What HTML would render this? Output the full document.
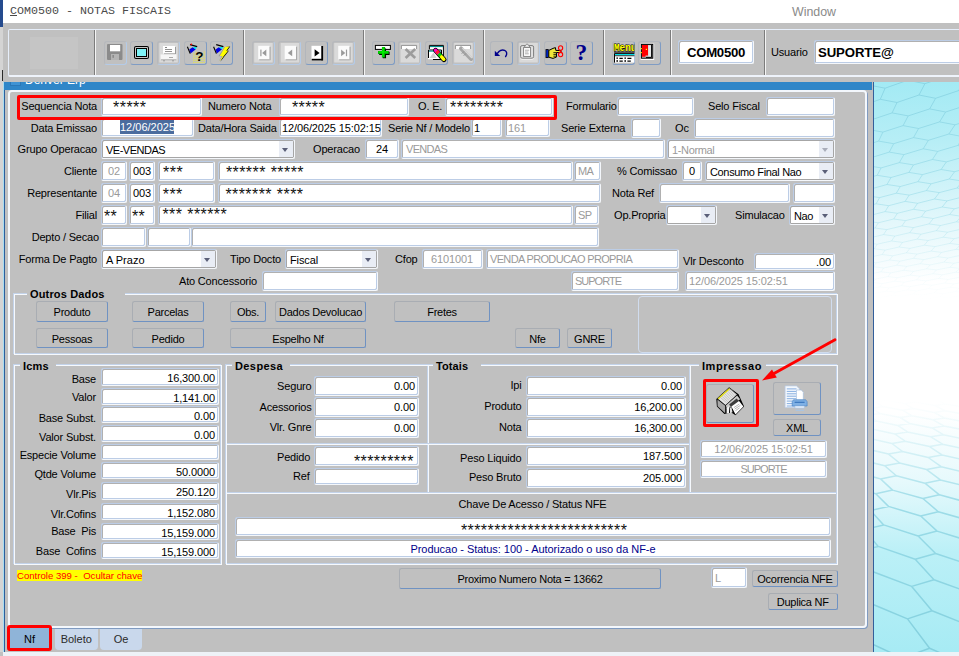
<!DOCTYPE html>
<html lang="pt"><head><meta charset="utf-8"><title>COM0500 - NOTAS FISCAIS</title>
<style>
html,body{margin:0;padding:0;}
body{width:959px;height:656px;overflow:hidden;background:#c0c0c0;position:relative;font-family:"Liberation Sans",sans-serif;font-size:11px;color:#000;}
body>div{position:absolute;box-sizing:border-box;}
.mono{font-family:"Liberation Mono",monospace;font-size:11.67px;line-height:16px;color:#4a4a4a;white-space:pre;}
.l{line-height:14px;white-space:nowrap;letter-spacing:-0.18px;}
.f{background:#fff;border:1px solid;border-color:#bccde6 #f4f7fb #f4f7fb #bccde6;border-radius:2.5px;box-shadow:inset 1px 1px 0 #b0b0b0,inset -1px -1px 0 #bccde6;white-space:nowrap;overflow:hidden;letter-spacing:-0.12px;}
.f.big{font-weight:bold;font-size:13.2px;}
.st{font-size:16px;letter-spacing:0.43px;line-height:14px;white-space:pre;color:#111;}
.cbx{box-shadow:inset 1px 1px 0 #a6a6a6,inset -1px -1px 0 #a6a6a6;}
.cb{position:absolute;right:1px;top:1px;width:14px;background:#e9edf5;}
.cb b{position:absolute;left:3px;top:50%;margin-top:-1.2px;border:3.8px solid transparent;border-top:4.3px solid #555;border-bottom:none;width:0;height:0;}
.b{background:#c0c0c0;border:1px solid;border-color:#a9adb3 #6f92c2 #6f92c2 #a9adb3;border-radius:2.5px;text-align:center;white-space:nowrap;letter-spacing:-0.25px;}
.tb{border:1px solid;border-color:#b2b6bc #7f9cc4 #7f9cc4 #b2b6bc;border-radius:3px;}
.tb.dis{border-color:#b6b8bc #b4cbe8 #b4cbe8 #b6b8bc;}
.fs1{border:1px solid #c3d3ea;}
.fs2{border:1px solid #f6f9fd;}
.lg{background:#c0c0c0;font-weight:bold;line-height:14px;padding-left:3px;font-size:11px;letter-spacing:0.15px;white-space:nowrap;}
#bg{background:linear-gradient(to bottom,#a3eaf4 0px,#b7eef6 60px,#e3f7fb 140px,#ffffff 200px,#ffffff 330px,#e6f9fc 400px,#bbf0f7 470px,#a7ebf4 570px);}
</style></head>
<body>
<div class="" style="left:0px;top:0px;width:959px;height:23px;background:#fff;"></div>
<div class="" style="left:0px;top:0px;width:3px;height:27px;background:#254b8e;"></div>
<div class="" style="left:0px;top:27px;width:3px;height:625px;background:#d4d4d4;"></div>
<div class="" style="left:2px;top:70px;width:1px;height:11px;background:#2a2a2a;"></div>
<div class="mono" style="left:10px;top:3px;"><u>C</u>OM0500 - NOTAS FISCAIS</div>
<div class="l" style="left:792px;top:4.6px;font-size:12.4px;color:#8a8a8a;letter-spacing:0;">Window</div>
<div class="" style="left:8px;top:29px;width:962px;height:48px;border:1px solid #e6eefa;border-bottom:2px solid #eef3fb;border-radius:2px;"></div>
<div class="" style="left:30px;top:37px;width:48px;height:32px;background:#c5c5c5;"></div>
<div class="" style="left:94px;top:30px;width:1px;height:45px;background:#7c7c7c;"></div>
<div class="" style="left:95px;top:30px;width:1px;height:45px;background:#f4f4f4;"></div>
<div class="" style="left:243px;top:30px;width:1px;height:45px;background:#7c7c7c;"></div>
<div class="" style="left:244px;top:30px;width:1px;height:45px;background:#f4f4f4;"></div>
<div class="" style="left:363px;top:30px;width:1px;height:45px;background:#7c7c7c;"></div>
<div class="" style="left:364px;top:30px;width:1px;height:45px;background:#f4f4f4;"></div>
<div class="" style="left:483px;top:30px;width:1px;height:45px;background:#7c7c7c;"></div>
<div class="" style="left:484px;top:30px;width:1px;height:45px;background:#f4f4f4;"></div>
<div class="" style="left:603px;top:30px;width:1px;height:45px;background:#7c7c7c;"></div>
<div class="" style="left:604px;top:30px;width:1px;height:45px;background:#f4f4f4;"></div>
<div class="" style="left:670px;top:30px;width:1px;height:45px;background:#7c7c7c;"></div>
<div class="" style="left:671px;top:30px;width:1px;height:45px;background:#f4f4f4;"></div>
<div class="" style="left:764px;top:30px;width:1px;height:45px;background:#7c7c7c;"></div>
<div class="" style="left:765px;top:30px;width:1px;height:45px;background:#f4f4f4;"></div>
<div class="tb dis" style="left:103.5px;top:40.5px;width:23.3px;height:24.0px;"></div>
<div class="tb" style="left:130px;top:40.5px;width:23.3px;height:24.0px;"></div>
<div class="tb dis" style="left:156.8px;top:40.5px;width:23.3px;height:24.0px;"></div>
<div class="tb" style="left:183.5px;top:40.5px;width:23.3px;height:24.0px;"></div>
<div class="tb" style="left:210px;top:40.5px;width:23.3px;height:24.0px;"></div>
<div class="tb dis" style="left:251.7px;top:40.5px;width:23.3px;height:24.0px;"></div>
<div class="tb dis" style="left:278.2px;top:40.5px;width:23.3px;height:24.0px;"></div>
<div class="tb" style="left:305px;top:40.5px;width:23.3px;height:24.0px;"></div>
<div class="tb dis" style="left:331.7px;top:40.5px;width:23.3px;height:24.0px;"></div>
<div class="tb" style="left:371.7px;top:40.5px;width:23.3px;height:24.0px;"></div>
<div class="tb dis" style="left:398px;top:40.5px;width:23.3px;height:24.0px;"></div>
<div class="tb" style="left:424.8px;top:40.5px;width:23.3px;height:24.0px;"></div>
<div class="tb dis" style="left:451.7px;top:40.5px;width:23.3px;height:24.0px;"></div>
<div class="tb" style="left:489.7px;top:40.5px;width:23.3px;height:24.0px;"></div>
<div class="tb dis" style="left:516.8px;top:40.5px;width:23.3px;height:24.0px;"></div>
<div class="tb" style="left:543.7px;top:40.5px;width:23.3px;height:24.0px;"></div>
<div class="tb" style="left:570.2px;top:40.5px;width:23.3px;height:24.0px;"></div>
<div class="tb" style="left:611.8px;top:40.5px;width:23.3px;height:24.0px;"></div>
<div class="tb" style="left:638.2px;top:40.5px;width:23.3px;height:24.0px;"></div>
<div class="f big" style="left:678px;top:40px;width:76px;height:24px;line-height:23px;text-align:center;padding:0 3px;letter-spacing:-0.3px;">COM0500</div>
<div class="l" style="left:771px;top:44.5px;">Usuario</div>
<div class="f big" style="left:814px;top:40px;width:162px;height:24px;line-height:23px;text-align:left;padding:0 3px;">SUPORTE@</div>
<div class="" style="left:3px;top:82px;width:1px;height:570px;background:#a8dcf0;"></div>
<div class="" style="left:4px;top:82px;width:1px;height:570px;background:#2c5e9c;"></div>
<div class="" style="left:4px;top:82px;width:868px;height:7.5px;background:#2f86c8;"></div>
<div style="left:25px;top:72.5px;width:70px;height:15px;overflow:hidden;clip-path:inset(9.5px 0 0 0);color:#fff;font-size:12px;line-height:15px;white-space:nowrap;">Denver Erp</div>
<div class="" style="left:10px;top:82px;width:11px;height:4px;background:#3f93d4;border:1px solid #2a78b8;border-top:none;box-sizing:border-box;"></div>
<div class="" style="left:873px;top:82px;width:1px;height:570px;background:#335f9b;"></div>
<div id="bg" style="left:874px;top:82px;width:85px;height:570px;"></div>
<svg style="position:absolute;left:874px;top:82px" width="85" height="570" viewBox="874 82 85 570"><defs><linearGradient id="hg1" gradientUnits="userSpaceOnUse" x1="0" y1="82" x2="0" y2="300"><stop offset="0" stop-color="#84d0e0" stop-opacity="0.8"/><stop offset="0.55" stop-color="#92d8e6" stop-opacity="0.5"/><stop offset="1" stop-color="#bfeaf2" stop-opacity="0"/></linearGradient><linearGradient id="hg2" gradientUnits="userSpaceOnUse" x1="0" y1="400" x2="0" y2="652"><stop offset="0" stop-color="#bfeaf2" stop-opacity="0"/><stop offset="0.4" stop-color="#8cd4e2" stop-opacity="0.75"/><stop offset="1" stop-color="#84d0de" stop-opacity="1"/></linearGradient></defs><path d="M907.7 80.2L885.1 88.2M885.1 88.2L867.7 84.8M867.7 84.8L872.4 72.9M880.3 99.3L859.2 106.7M948.5 75.5L924.9 83.7M924.9 83.7L907.7 80.2M907.7 80.2L913.5 68.1M919.0 95.0L897.0 102.5M897.0 102.5L880.3 99.3M880.3 99.3L885.1 88.2M892.1 112.9L871.4 119.8M871.4 119.8L855.2 116.8M958.6 90.6L935.6 98.3M935.6 98.3L919.0 95.0M919.0 95.0L924.9 83.7M929.7 108.9L908.2 115.9M908.2 115.9L892.1 112.9M892.1 112.9L897.0 102.5M903.1 125.6L882.9 132.1M882.9 132.1L867.3 129.3M867.3 129.3L871.4 119.8M878.6 141.1L859.6 147.1M975.0 94.0L958.6 90.6M958.6 90.6L965.6 79.1M968.0 104.8L945.6 112.0M945.6 112.0L929.7 108.9M929.7 108.9L935.6 98.3M939.6 121.9L918.6 128.5M918.6 128.5L903.1 125.6M903.1 125.6L908.2 115.9M913.5 137.6L893.7 143.7M893.7 143.7L878.6 141.1M878.6 141.1L882.9 132.1M889.3 152.1L870.7 157.8M870.7 157.8L856.0 155.3M976.8 118.0L955.0 124.8M955.0 124.8L939.6 121.9M939.6 121.9L945.6 112.0M948.9 134.0L928.4 140.3M928.4 140.3L913.5 137.6M913.5 137.6L918.6 128.5M923.2 148.8L903.9 154.6M903.9 154.6L889.3 152.1M889.3 152.1L893.7 143.7M899.4 162.6L881.1 167.9M881.1 167.9L866.9 165.6M866.9 165.6L870.7 157.8M877.2 175.3L859.9 180.3M985.1 130.4L963.8 136.8M963.8 136.8L948.9 134.0M948.9 134.0L955.0 124.8M957.7 145.5L937.7 151.4M937.7 151.4L923.2 148.8M923.2 148.8L928.4 140.3M932.4 159.5L913.5 164.9M913.5 164.9L899.4 162.6M899.4 162.6L903.9 154.6M908.9 172.4L891.0 177.5M891.0 177.5L877.2 175.3M877.2 175.3L881.1 167.9M887.0 184.5L870.0 189.2M870.0 189.2L856.6 187.1M972.1 148.1L957.7 145.5M957.7 145.5L963.8 136.8M966.0 156.3L946.4 161.9M946.4 161.9L932.4 159.5M932.4 159.5L937.7 151.4M941.1 169.5L922.5 174.6M922.5 174.6L908.9 172.4M908.9 172.4L913.5 164.9M917.9 181.7L900.3 186.5M900.3 186.5L887.0 184.5M887.0 184.5L891.0 177.5M896.3 193.2L879.6 197.6M879.6 197.6L866.6 195.7M866.6 195.7L870.0 189.2M876.1 203.8L860.2 208.0M973.8 166.5L954.6 171.7M954.6 171.7L941.1 169.5M941.1 169.5L946.4 161.9M949.3 179.0L931.1 183.8M931.1 183.8L917.9 181.7M917.9 181.7L922.5 174.6M926.4 190.6L909.2 195.1M909.2 195.1L896.3 193.2M896.3 193.2L900.3 186.5M905.1 201.4L888.7 205.7M888.7 205.7L876.1 203.8M876.1 203.8L879.6 197.6M885.1 211.6L869.5 215.6M869.5 215.6L857.2 213.9M981.2 176.2L962.4 181.1M962.4 181.1L949.3 179.0M949.3 179.0L954.6 171.7M957.1 188.0L939.3 192.6M939.3 192.6L926.4 190.6M926.4 190.6L931.1 183.8M934.5 199.0L917.6 203.3M917.6 203.3L905.1 201.4M905.1 201.4L909.2 195.1M913.5 209.3L897.4 213.3M897.4 213.3L885.1 211.6M885.1 211.6L888.7 205.7M893.7 219.0L878.3 222.8M878.3 222.8L866.4 221.1M866.4 221.1L869.5 215.6M875.1 228.0L860.4 231.6M969.8 190.0L957.1 188.0M957.1 188.0L962.4 181.1M964.4 196.5L947.0 200.9M947.0 200.9L934.5 199.0M934.5 199.0L939.3 192.6M942.2 207.0L925.6 211.1M925.6 211.1L913.5 209.3M913.5 209.3L917.6 203.3M921.4 216.8L905.6 220.6M905.6 220.6L893.7 219.0M893.7 219.0L897.4 213.3M901.9 226.0L886.8 229.6M886.8 229.6L875.1 228.0M875.1 228.0L878.3 222.8M883.5 234.6L869.0 238.1M869.0 238.1L857.6 236.6M971.4 204.6L954.3 208.8M954.3 208.8L942.2 207.0M942.2 207.0L947.0 200.9M949.6 214.5L933.3 218.5M933.3 218.5L921.4 216.8M921.4 216.8L925.6 211.1M929.0 223.9L913.5 227.6M913.5 227.6L901.9 226.0M901.9 226.0L905.6 220.6M909.7 232.7L894.8 236.1M894.8 236.1L883.5 234.6M883.5 234.6L886.8 229.6M891.5 241.0L877.2 244.2M877.2 244.2L866.1 242.8M866.1 242.8L869.0 238.1M874.3 248.8L860.6 251.9M978.1 212.3L961.3 216.3M961.3 216.3L949.6 214.5M949.6 214.5L954.3 208.8M956.5 221.8L940.5 225.5M940.5 225.5L929.0 223.9M929.0 223.9L933.3 218.5M936.3 230.7L921.0 234.2M921.0 234.2L909.7 232.7M909.7 232.7L913.5 227.6M917.2 239.1L902.5 242.4M902.5 242.4L891.5 241.0M891.5 241.0L894.8 236.1M899.1 247.0L885.1 250.1M885.1 250.1L874.3 248.8M874.3 248.8L877.2 244.2M882.1 254.5L868.6 257.5M968.0 223.4L956.5 221.8M956.5 221.8L961.3 216.3M963.2 228.7L947.5 232.2M947.5 232.2L936.3 230.7M936.3 230.7L940.5 225.5M943.2 237.2L928.1 240.5M928.1 240.5L917.2 239.1M917.2 239.1L921.0 234.2M924.3 245.2L909.9 248.4M909.9 248.4L899.1 247.0M899.1 247.0L902.5 242.4M906.4 252.8L892.6 255.8M892.6 255.8L882.1 254.5M882.1 254.5L885.1 250.1M889.6 260.0L876.3 262.8M876.3 262.8L866.0 261.6M873.6 266.8L860.8 269.5M974.3 230.2L963.2 228.7M963.2 228.7L968.0 223.4M969.6 235.3L954.1 238.7M954.1 238.7L943.2 237.2M943.2 237.2L947.5 232.2M949.8 243.4L935.0 246.6M935.0 246.6L924.3 245.2M924.3 245.2L928.1 240.5M931.1 251.1L917.0 254.1M917.0 254.1L906.4 252.8M906.4 252.8L909.9 248.4M913.5 258.3L899.9 261.2M899.9 261.2L889.6 260.0M889.6 260.0L892.6 255.8M896.7 265.2L883.7 268.0M883.7 268.0L873.6 266.8M873.6 266.8L876.3 262.8M880.9 271.8L868.3 274.4M975.6 241.5L960.4 244.8M960.4 244.8L949.8 243.4M949.8 243.4L954.1 238.7M956.1 249.3L941.6 252.4M941.6 252.4L931.1 251.1M931.1 251.1L935.0 246.6M937.7 256.7L923.7 259.6M923.7 259.6L913.5 258.3M913.5 258.3L917.0 254.1M920.2 263.7L906.8 266.4M906.8 266.4L896.7 265.2M896.7 265.2L899.9 261.2M903.6 270.3L890.7 272.9M890.7 272.9L880.9 271.8M880.9 271.8L883.7 268.0M887.9 276.6L875.5 279.1M875.5 279.1L865.8 278.0M872.9 282.5L861.0 284.9M966.5 250.7L956.1 249.3M956.1 249.3L960.4 244.8M962.2 255.0L947.9 258.0M947.9 258.0L937.7 256.7M937.7 256.7L941.6 252.4M943.9 262.1L930.2 264.9M930.2 264.9L920.2 263.7M920.2 263.7L923.7 259.6M926.7 268.8L913.5 271.4M913.5 271.4L903.6 270.3M903.6 270.3L906.8 266.4M910.2 275.1L897.5 277.7M897.5 277.7L887.9 276.6M887.9 276.6L890.7 272.9M894.6 281.2L882.4 283.6M882.4 283.6L872.9 282.5M872.9 282.5L875.5 279.1M879.8 286.9L868.0 289.2M972.3 256.3L962.2 255.0M962.2 255.0L966.5 250.7M968.0 260.5L953.9 263.3M953.9 263.3L943.9 262.1M943.9 262.1L947.9 258.0M950.0 267.3L936.4 269.9M936.4 269.9L926.7 268.8M926.7 268.8L930.2 264.9M932.9 273.7L919.9 276.2M919.9 276.2L910.2 275.1M910.2 275.1L913.5 271.4M916.6 279.8L904.1 282.2M904.1 282.2L894.6 281.2M894.6 281.2L897.5 277.7M901.2 285.6L889.1 287.9M889.1 287.9L879.8 286.9M879.8 286.9L882.4 283.6M886.4 291.2L874.8 293.4M874.8 293.4L865.6 292.4M872.4 296.5L861.1 298.6M973.6 265.7L959.7 268.4M959.7 268.4L950.0 267.3M950.0 267.3L953.9 263.3M955.8 272.2L942.4 274.8M942.4 274.8L932.9 273.7M932.9 273.7L936.4 269.9M938.8 278.4L926.0 280.9M926.0 280.9L916.6 279.8M916.6 279.8L919.9 276.2M922.7 284.3L910.4 286.6M910.4 286.6L901.2 285.6M901.2 285.6L904.1 282.2M907.4 289.9L895.5 292.1M895.5 292.1L886.4 291.2M886.4 291.2L889.1 287.9M892.8 295.2L881.3 297.4M881.3 297.4L872.4 296.5M872.4 296.5L874.8 293.4M965.3 273.4L955.8 272.2M955.8 272.2L959.7 268.4M961.3 277.0L948.2 279.5M948.2 279.5L938.8 278.4M938.8 278.4L942.4 274.8M944.6 283.0L932.0 285.3M932.0 285.3L922.7 284.3M922.7 284.3L926.0 280.9M928.7 288.6L916.5 290.9M916.5 290.9L907.4 289.9M907.4 289.9L910.4 286.6M913.5 294.0L901.7 296.2M901.7 296.2L892.8 295.2M892.8 295.2L895.5 292.1M899.0 299.2L887.6 301.2M878.8 300.3L881.3 297.4M970.6 278.1L961.3 277.0M961.3 277.0L965.3 273.4M966.7 281.6L953.8 284.0M953.8 284.0L944.6 283.0M944.6 283.0L948.2 279.5M950.1 287.3L937.7 289.6M937.7 289.6L928.7 288.6M928.7 288.6L932.0 285.3M934.3 292.8L922.3 295.0M922.3 295.0L913.5 294.0M913.5 294.0L916.5 290.9M919.3 298.0L907.7 300.1M907.7 300.1L899.0 299.2M899.0 299.2L901.7 296.2M971.8 286.0L959.1 288.3M959.1 288.3L950.1 287.3M950.1 287.3L953.8 284.0M955.5 291.6L943.2 293.7M943.2 293.7L934.3 292.8M934.3 292.8L937.7 289.6M939.8 296.8L928.0 298.9M928.0 298.9L919.3 298.0M919.3 298.0L922.3 295.0M964.2 292.5L955.5 291.6M955.5 291.6L959.1 288.3M960.6 295.6L948.5 297.7M948.5 297.7L939.8 296.8M939.8 296.8L943.2 293.7M924.9 301.9L928.0 298.9M969.2 296.5L960.6 295.6M960.6 295.6L964.2 292.5M965.6 299.5L953.6 301.6M945.1 300.7L948.5 297.7" stroke="url(#hg1)" stroke-width="1" fill="none"/><path d="M902.5 658.1L855.2 636.1M982.7 671.6L929.6 648.2M929.6 648.2L902.5 658.1M907.5 618.9L864.3 600.8M980.0 629.9L932.0 610.8M932.0 610.8L907.5 618.9M907.5 618.9L929.6 648.2M911.7 586.4L871.8 571.3M871.8 571.3L848.9 577.7M977.8 595.6L934.0 579.7M934.0 579.7L911.7 586.4M911.7 586.4L932.0 610.8M915.2 559.2L878.2 546.4M878.2 546.4L857.2 551.8M857.2 551.8L871.8 571.3M976.0 567.0L935.6 553.5M935.6 553.5L915.2 559.2M915.2 559.2L934.0 579.7M918.1 536.0L883.7 524.9M883.7 524.9L864.3 529.6M864.3 529.6L878.2 546.4M870.4 510.5L840.6 501.2M974.4 542.6L937.1 531.1M937.1 531.1L918.1 536.0M918.1 536.0L935.6 553.5M920.7 516.0L888.5 506.4M888.5 506.4L870.4 510.5M870.4 510.5L883.7 524.9M875.8 493.7L847.6 485.6M973.1 521.7L938.3 511.7M938.3 511.7L920.7 516.0M920.7 516.0L937.1 531.1M922.9 498.5L892.6 490.1M892.6 490.1L875.8 493.7M875.8 493.7L888.5 506.4M880.5 478.9L853.8 471.7M971.9 503.6L939.4 494.8M939.4 494.8L922.9 498.5M922.9 498.5L938.3 511.7M924.9 483.2L896.3 475.7M896.3 475.7L880.5 478.9M880.5 478.9L892.6 490.1M884.7 465.8L859.3 459.4M970.9 487.6L940.4 479.9M940.4 479.9L924.9 483.2M924.9 483.2L939.4 494.8M926.6 469.6L899.6 463.0M899.6 463.0L884.7 465.8M884.7 465.8L896.3 475.7M888.5 454.1L864.3 448.3M970.0 473.6L941.2 466.7M941.2 466.7L926.6 469.6M926.6 469.6L940.4 479.9M928.2 457.5L902.5 451.5M902.5 451.5L888.5 454.1M888.5 454.1L899.6 463.0M891.9 443.5L868.8 438.3M969.2 461.0L942.0 454.9M942.0 454.9L928.2 457.5M928.2 457.5L941.2 466.7M929.6 446.6L905.1 441.2M905.1 441.2L891.9 443.5M891.9 443.5L902.5 451.5M894.9 434.0L872.8 429.3M872.8 429.3L860.0 431.3M968.5 449.8L942.6 444.2M942.6 444.2L929.6 446.6M929.6 446.6L942.0 454.9M930.8 436.8L907.5 431.9M907.5 431.9L894.9 434.0M894.9 434.0L905.1 441.2M897.7 425.4L876.5 421.0M876.5 421.0L864.3 422.9M864.3 422.9L872.8 429.3M967.9 439.7L943.3 434.7M943.3 434.7L930.8 436.8M930.8 436.8L942.6 444.2M932.0 427.9L909.7 423.5M909.7 423.5L897.7 425.4M897.7 425.4L907.5 431.9M900.2 417.5L879.9 413.5M879.9 413.5L868.2 415.2M868.2 415.2L876.5 421.0M871.8 408.2L853.2 404.6M967.3 430.5L943.8 425.9M943.8 425.9L932.0 427.9M932.0 427.9L943.3 434.7M933.0 419.8L911.7 415.7M911.7 415.7L900.2 417.5M900.2 417.5L909.7 423.5M902.5 410.2L883.0 406.6M883.0 406.6L871.8 408.2M871.8 408.2L879.9 413.5M875.2 401.7L857.2 398.4M966.7 422.2L944.3 418.0M944.3 418.0L933.0 419.8M933.0 419.8L943.8 425.9M934.0 412.4L913.5 408.6M913.5 408.6L902.5 410.2M902.5 410.2L911.7 415.7M904.6 403.6L885.8 400.2M885.8 400.2L875.2 401.7M875.2 401.7L883.0 406.6M966.2 414.5L944.8 410.7M944.8 410.7L934.0 412.4M934.0 412.4L944.3 418.0M934.8 405.5L915.2 402.1M915.2 402.1L904.6 403.6M904.6 403.6L913.5 408.6M878.2 395.7L885.8 400.2M965.8 407.5L945.2 404.0M945.2 404.0L934.8 405.5M934.8 405.5L944.8 410.7M906.6 397.4L915.2 402.1M965.4 401.1L945.6 397.9M935.6 399.2L945.2 404.0" stroke="url(#hg2)" stroke-width="1.5" fill="none"/></svg>
<div class="" style="left:3px;top:652px;width:956px;height:4px;background:#eef2f7;"></div>
<div class="" style="left:8px;top:90px;width:859px;height:538px;border:2px solid #f3f7fc;border-radius:4px;box-shadow:1px 1px 0 #7f9ac0;"></div>
<div class="l" style="right:862px;top:98.5px;">Sequencia Nota</div>
<div class="f" style="left:101px;top:97px;width:101px;height:19px;line-height:18px;text-align:left;padding:0 3px;"></div>
<div class="st" style="left:113.1px;top:101px;">*****</div>
<div class="l" style="left:208px;top:98.5px;">Numero Nota</div>
<div class="f" style="left:279px;top:97px;width:130px;height:19px;line-height:18px;text-align:left;padding:0 3px;"></div>
<div class="st" style="left:291.9px;top:101px;">*****</div>
<div class="l" style="left:418px;top:98.5px;">O. E.</div>
<div class="f" style="left:445px;top:97px;width:108px;height:19px;line-height:18px;text-align:left;padding:0 3px;"></div>
<div class="st" style="left:450.1px;top:101px;">********</div>
<div class="l" style="left:566px;top:98.5px;">Formulario</div>
<div class="f" style="left:617px;top:97px;width:77px;height:19px;line-height:18px;text-align:left;padding:0 3px;"></div>
<div class="l" style="left:708px;top:98.5px;">Selo Fiscal</div>
<div class="f" style="left:766px;top:97px;width:69px;height:19px;line-height:18px;text-align:left;padding:0 3px;"></div>
<div class="l" style="right:862px;top:121px;">Data Emissao</div>
<div class="f" style="left:101px;top:118px;width:93px;height:19px;line-height:18px;text-align:left;padding:0 3px;"></div>
<div class="" style="left:120px;top:120px;width:54px;height:14px;background:#4b6c9e;color:#fff;font-size:11px;line-height:13px;padding-top:1px;text-align:center;box-sizing:border-box;">12/06/2025</div>
<div class="l" style="left:198px;top:121px;">Data/Hora Saida</div>
<div class="f" style="left:279px;top:118px;width:103px;height:19px;line-height:18px;text-align:left;padding:0 2px;overflow:hidden;white-space:nowrap;">12/06/2025 15:02:15</div>
<div class="l" style="left:388px;top:121px;">Serie Nf / Modelo</div>
<div class="f" style="left:471px;top:118px;width:31px;height:19px;line-height:18px;text-align:left;padding:0 2px;">1</div>
<div class="f" style="left:505px;top:118px;width:45px;height:19px;line-height:18px;text-align:left;padding:0 2px;color:#9a9a9a;">161</div>
<div class="l" style="left:561px;top:121px;">Serie Externa</div>
<div class="f" style="left:631px;top:118px;width:30px;height:20px;line-height:19px;text-align:left;padding:0 3px;"></div>
<div class="l" style="left:675px;top:121px;">Oc</div>
<div class="f" style="left:694px;top:118px;width:141px;height:20px;line-height:19px;text-align:left;padding:0 3px;"></div>
<div class="l" style="right:862px;top:141.5px;">Grupo Operacao</div>
<div class="f cbx" style="left:101px;top:139px;width:194px;height:20px;line-height:20px;padding:0 4px;letter-spacing:-0.5px;">VE-VENDAS<i class="cb" style="height:16px"><b style="border-top-color:#5a5f78"></b></i></div>
<div class="l" style="left:313px;top:141.5px;">Operacao</div>
<div class="f" style="left:365px;top:139px;width:34px;height:20px;line-height:19px;text-align:center;padding:0 3px;">24</div>
<div class="f" style="left:401px;top:139px;width:264px;height:20px;line-height:19px;text-align:left;padding:0 4px;color:#9a9a9a;letter-spacing:-0.7px;">VENDAS</div>
<div class="f cbx" style="left:667px;top:139px;width:168px;height:20px;line-height:20px;padding:0 4px;letter-spacing:-0.35px;color:#9a9a9a;">1-Normal<i class="cb" style="height:16px"><b style="border-top-color:#a9adba"></b></i></div>
<div class="l" style="right:862px;top:163.5px;">Cliente</div>
<div class="f" style="left:101px;top:161px;width:26px;height:20px;line-height:19px;text-align:center;padding:0 3px;color:#9a9a9a;">02</div>
<div class="f" style="left:129px;top:161px;width:26px;height:20px;line-height:19px;text-align:center;padding:0 3px;">003</div>
<div class="f" style="left:158px;top:161px;width:57px;height:20px;line-height:19px;text-align:left;padding:0 3px;"></div>
<div class="st" style="left:163.1px;top:166px;">***</div>
<div class="f" style="left:218px;top:161px;width:355px;height:20px;line-height:19px;text-align:left;padding:0 3px;"></div>
<div class="st" style="left:225.9px;top:166px;">****** *****</div>
<div class="f" style="left:574px;top:161px;width:27px;height:20px;line-height:19px;text-align:left;padding:0 3px;color:#9a9a9a;letter-spacing:-0.7px;">MA</div>
<div class="l" style="left:617px;top:163.5px;">% Comissao</div>
<div class="f" style="left:682px;top:161px;width:20px;height:20px;line-height:19px;text-align:center;padding:0 3px;">0</div>
<div class="f cbx" style="left:705px;top:161px;width:130px;height:20px;line-height:20px;padding:0 4px;letter-spacing:-0.35px;">Consumo Final Nao<i class="cb" style="height:16px"><b style="border-top-color:#5a5f78"></b></i></div>
<div class="l" style="right:862px;top:185.5px;">Representante</div>
<div class="f" style="left:101px;top:183px;width:26px;height:20px;line-height:19px;text-align:center;padding:0 3px;color:#9a9a9a;">04</div>
<div class="f" style="left:129px;top:183px;width:26px;height:20px;line-height:19px;text-align:center;padding:0 3px;">003</div>
<div class="f" style="left:158px;top:183px;width:57px;height:20px;line-height:19px;text-align:left;padding:0 3px;"></div>
<div class="st" style="left:162.8px;top:188px;">***</div>
<div class="f" style="left:218px;top:183px;width:383px;height:20px;line-height:19px;text-align:left;padding:0 3px;"></div>
<div class="st" style="left:225.4px;top:188px;">******* ****</div>
<div class="l" style="left:612px;top:185.5px;">Nota Ref</div>
<div class="f" style="left:659px;top:183px;width:131px;height:20px;line-height:19px;text-align:left;padding:0 3px;"></div>
<div class="f" style="left:793px;top:183px;width:42px;height:20px;line-height:19px;text-align:left;padding:0 3px;"></div>
<div class="l" style="right:862px;top:207.5px;">Filial</div>
<div class="f" style="left:101px;top:205px;width:26px;height:20px;line-height:19px;text-align:left;padding:0 3px;"></div>
<div class="st" style="left:103.9px;top:210px;">**</div>
<div class="f" style="left:129px;top:205px;width:26px;height:20px;line-height:19px;text-align:left;padding:0 3px;"></div>
<div class="st" style="left:131.9px;top:210px;">**</div>
<div class="f" style="left:158px;top:205px;width:415px;height:20px;line-height:19px;text-align:left;padding:0 3px;"></div>
<div class="st" style="left:162.4px;top:208px;">*** ******</div>
<div class="f" style="left:574px;top:205px;width:25px;height:20px;line-height:19px;text-align:left;padding:0 3px;color:#9a9a9a;letter-spacing:-0.7px;">SP</div>
<div class="l" style="left:614px;top:207.5px;">Op.Propria</div>
<div class="f cbx" style="left:666px;top:205px;width:51px;height:20px;line-height:20px;padding:0 4px;letter-spacing:-0.35px;"><i class="cb" style="height:16px"><b style="border-top-color:#5a5f78"></b></i></div>
<div class="l" style="left:735px;top:207.5px;">Simulacao</div>
<div class="f cbx" style="left:789px;top:205px;width:46px;height:20px;line-height:20px;padding:0 4px;letter-spacing:-0.35px;">Nao<i class="cb" style="height:16px"><b style="border-top-color:#5a5f78"></b></i></div>
<div class="l" style="right:860px;top:229.5px;">Depto / Secao</div>
<div class="f" style="left:101px;top:227px;width:45px;height:20px;line-height:19px;text-align:left;padding:0 3px;"></div>
<div class="f" style="left:147px;top:227px;width:44px;height:20px;line-height:19px;text-align:left;padding:0 3px;"></div>
<div class="f" style="left:191px;top:227px;width:408px;height:20px;line-height:19px;text-align:left;padding:0 3px;"></div>
<div class="l" style="right:862px;top:251.5px;">Forma De Pagto</div>
<div class="f cbx" style="left:101px;top:249px;width:116px;height:20px;line-height:20px;padding:0 4px;letter-spacing:0px;">A Prazo<i class="cb" style="height:16px"><b style="border-top-color:#5a5f78"></b></i></div>
<div class="l" style="left:230px;top:251.5px;">Tipo Docto</div>
<div class="f cbx" style="left:285px;top:249px;width:93px;height:20px;line-height:20px;padding:0 4px;letter-spacing:-0.1px;">Fiscal<i class="cb" style="height:16px"><b style="border-top-color:#5a5f78"></b></i></div>
<div class="l" style="left:395px;top:251.5px;">Cfop</div>
<div class="f" style="left:422px;top:249px;width:61px;height:20px;line-height:19px;text-align:left;padding:0 8px;color:#9a9a9a;">6101001</div>
<div class="f" style="left:486px;top:249px;width:193px;height:20px;line-height:19px;text-align:left;padding:0 3px;color:#9a9a9a;letter-spacing:-0.65px;">VENDA PRODUCAO PROPRIA</div>
<div class="l" style="left:683px;top:253.5px;">Vlr Desconto</div>
<div class="f" style="left:754px;top:253px;width:81px;height:17px;line-height:16px;text-align:right;padding:0 3px;">.00</div>
<div class="l" style="left:179px;top:273.5px;">Ato Concessorio</div>
<div class="f" style="left:262px;top:271px;width:116px;height:20px;line-height:19px;text-align:left;padding:0 3px;"></div>
<div class="f" style="left:571px;top:271px;width:108px;height:20px;line-height:19px;text-align:left;padding:0 3px;color:#9a9a9a;letter-spacing:-1px;">SUPORTE</div>
<div class="f" style="left:685px;top:271px;width:150px;height:20px;line-height:19px;text-align:left;padding:0 3px;color:#9a9a9a;">12/06/2025 15:02:51</div>
<div class="fs1" style="left:13px;top:293px;width:824px;height:61px;"></div>
<div class="fs2" style="left:14px;top:294px;width:824px;height:61px;"></div>
<div class="lg" style="left:27px;top:286.5px;width:98px;letter-spacing:0.15px;">Outros Dados</div>
<div class="b" style="left:36px;top:301px;width:72px;height:21px;line-height:19px;padding-top:1px;">Produto</div>
<div class="b" style="left:132px;top:301px;width:72px;height:21px;line-height:19px;padding-top:1px;">Parcelas</div>
<div class="b" style="left:230px;top:301px;width:36px;height:21px;line-height:19px;padding-top:1px;">Obs.</div>
<div class="b" style="left:275px;top:301px;width:91px;height:21px;line-height:19px;padding-top:1px;">Dados Devolucao</div>
<div class="b" style="left:394px;top:301px;width:96px;height:21px;line-height:19px;padding-top:1px;">Fretes</div>
<div class="b" style="left:36px;top:328px;width:72px;height:20px;line-height:18px;padding-top:1px;">Pessoas</div>
<div class="b" style="left:132px;top:328px;width:72px;height:20px;line-height:18px;padding-top:1px;">Pedido</div>
<div class="b" style="left:230px;top:328px;width:136px;height:20px;line-height:18px;padding-top:1px;">Espelho Nf</div>
<div class="b" style="left:515px;top:328px;width:45px;height:20px;line-height:18px;padding-top:1px;">Nfe</div>
<div class="b" style="left:567px;top:328px;width:45px;height:20px;line-height:18px;padding-top:1px;">GNRE</div>
<div class="" style="left:637.5px;top:296px;width:194.0px;height:56.5px;border:1px solid #d0dcee;border-radius:4px;"></div>
<div class="fs1" style="left:13px;top:364px;width:208px;height:200px;"></div>
<div class="fs2" style="left:14px;top:365px;width:208px;height:200px;"></div>
<div class="lg" style="left:20px;top:358.5px;width:36px;letter-spacing:0.2px;">Icms</div>
<div class="l" style="right:863px;top:371.5px;">Base</div>
<div class="f" style="left:101px;top:368px;width:118px;height:18px;line-height:17px;text-align:right;padding:0 3px;padding-top:1px;">16,300.00</div>
<div class="l" style="right:863px;top:389.5px;">Valor</div>
<div class="f" style="left:101px;top:388px;width:118px;height:17px;line-height:16px;text-align:right;padding:0 3px;padding-top:1px;">1,141.00</div>
<div class="l" style="right:863px;top:410.5px;">Base Subst.</div>
<div class="f" style="left:101px;top:406px;width:118px;height:17px;line-height:16px;text-align:right;padding:0 3px;padding-top:1px;">0.00</div>
<div class="l" style="right:863px;top:430px;">Valor Subst.</div>
<div class="f" style="left:101px;top:425px;width:118px;height:17px;line-height:16px;text-align:right;padding:0 3px;padding-top:1px;">0.00</div>
<div class="l" style="right:863px;top:447.5px;">Especie Volume</div>
<div class="f" style="left:101px;top:444px;width:118px;height:16px;line-height:15px;text-align:right;padding:0 3px;padding-top:1px;"></div>
<div class="l" style="right:863px;top:467px;">Qtde Volume</div>
<div class="f" style="left:101px;top:462px;width:118px;height:17px;line-height:16px;text-align:right;padding:0 3px;padding-top:1px;">50.0000</div>
<div class="l" style="right:863px;top:486.5px;">Vlr.Pis</div>
<div class="f" style="left:101px;top:482px;width:118px;height:18px;line-height:17px;text-align:right;padding:0 3px;padding-top:1px;">250.120</div>
<div class="l" style="right:863px;top:507px;">Vlr.Cofins</div>
<div class="f" style="left:101px;top:503px;width:118px;height:17px;line-height:16px;text-align:right;padding:0 3px;padding-top:1px;">1,152.080</div>
<div class="l" style="right:863px;top:524px;">Base&nbsp; Pis</div>
<div class="f" style="left:101px;top:522.5px;width:118px;height:17.0px;line-height:16.0px;text-align:right;padding:0 3px;padding-top:1px;">15,159.000</div>
<div class="l" style="right:863px;top:544px;">Base&nbsp; Cofins</div>
<div class="f" style="left:101px;top:542px;width:118px;height:17px;line-height:16px;text-align:right;padding:0 3px;padding-top:1px;">15,159.000</div>
<div class="fs1" style="left:225px;top:364px;width:612px;height:200px;"></div>
<div class="fs2" style="left:226px;top:365px;width:612px;height:200px;"></div>
<div class="" style="left:427px;top:366px;width:1px;height:126px;background:#c3d3ea;"></div>
<div class="" style="left:428px;top:366px;width:1px;height:126px;background:#f6f9fd;"></div>
<div class="" style="left:689px;top:366px;width:1px;height:126px;background:#c3d3ea;"></div>
<div class="" style="left:690px;top:366px;width:1px;height:126px;background:#f6f9fd;"></div>
<div class="" style="left:227px;top:443px;width:462px;height:1px;background:#c3d3ea;"></div>
<div class="" style="left:227px;top:444px;width:462px;height:1px;background:#f6f9fd;"></div>
<div class="" style="left:227px;top:492px;width:609px;height:1px;background:#c3d3ea;"></div>
<div class="" style="left:227px;top:493px;width:609px;height:1px;background:#f6f9fd;"></div>
<div class="lg" style="left:232px;top:358.5px;width:58px;letter-spacing:0.4px;">Despesa</div>
<div class="lg" style="left:433px;top:358.5px;width:48px;letter-spacing:0.1px;">Totais</div>
<div class="lg" style="left:699px;top:358.5px;width:67px;letter-spacing:0.55px;">Impressao</div>
<div class="l" style="right:647.5px;top:378.5px;">Seguro</div>
<div class="f" style="left:314px;top:376px;width:105px;height:20px;line-height:19px;text-align:right;padding:0 3px;">0.00</div>
<div class="l" style="right:647.5px;top:399.5px;">Acessorios</div>
<div class="f" style="left:314px;top:397px;width:105px;height:20px;line-height:19px;text-align:right;padding:0 3px;">0.00</div>
<div class="l" style="right:647.5px;top:420px;">Vlr. Gnre</div>
<div class="f" style="left:314px;top:418px;width:105px;height:20px;line-height:19px;text-align:right;padding:0 3px;">0.00</div>
<div class="l" style="left:277px;top:450px;">Pedido</div>
<div class="f" style="left:314px;top:446px;width:105px;height:20px;line-height:19px;text-align:left;padding:0 3px;"></div>
<div class="st" style="left:353.9px;top:455px;">*********</div>
<div class="l" style="left:293px;top:469px;">Ref</div>
<div class="f" style="left:314px;top:468px;width:105px;height:17px;line-height:16px;text-align:left;padding:0 3px;"></div>
<div class="l" style="right:437.5px;top:378px;">Ipi</div>
<div class="f" style="left:526px;top:376px;width:160px;height:20px;line-height:19px;text-align:right;padding:0 3px;">0.00</div>
<div class="l" style="right:437.5px;top:399px;">Produto</div>
<div class="f" style="left:526px;top:397px;width:160px;height:20px;line-height:19px;text-align:right;padding:0 3px;">16,200.00</div>
<div class="l" style="right:437.5px;top:420px;">Nota</div>
<div class="f" style="left:526px;top:418px;width:160px;height:20px;line-height:19px;text-align:right;padding:0 3px;">16,300.00</div>
<div class="l" style="right:437.5px;top:450.5px;">Peso Liquido</div>
<div class="f" style="left:526px;top:446px;width:160px;height:20px;line-height:19px;text-align:right;padding:0 3px;">187.500</div>
<div class="l" style="right:437.5px;top:470px;">Peso Bruto</div>
<div class="f" style="left:526px;top:468px;width:160px;height:20px;line-height:19px;text-align:right;padding:0 3px;">205.000</div>
<div class="b" style="left:706px;top:383.5px;width:48px;height:39.5px;line-height:37.5px;padding-top:1px;"></div>
<div class="b" style="left:773px;top:382px;width:48px;height:32.5px;line-height:30.5px;padding-top:1px;"></div>
<div class="b" style="left:773px;top:418.5px;width:48px;height:17.5px;line-height:15.5px;padding-top:1px;">XML</div>
<div class="f" style="left:700px;top:440px;width:127px;height:18px;line-height:17px;text-align:center;padding:0 3px;color:#9a9a9a;">12/06/2025 15:02:51</div>
<div class="f" style="left:700px;top:460px;width:127px;height:18px;line-height:17px;text-align:center;padding:0 3px;color:#9a9a9a;letter-spacing:-1px;">SUPORTE</div>
<div class="l" style="left:382.5px;width:300px;text-align:center;top:496.5px;">Chave De Acesso / Status NFE</div>
<div class="f" style="left:235px;top:517px;width:596px;height:19px;line-height:18px;text-align:left;padding:0 3px;"></div>
<div class="st" style="left:460.9px;top:524px;">*************************</div>
<div class="f" style="left:235px;top:539px;width:596px;height:19px;line-height:18px;text-align:center;padding:0 3px;color:#00008b;letter-spacing:-0.04px;">Producao - Status: 100 - Autorizado o uso da NF-e</div>
<div style="left:17px;top:569.5px;height:11.5px;line-height:11.5px;background:#ff0;color:#f00;font-size:9.6px;white-space:pre;">Controle 399 -  Ocultar chave</div>
<div class="b" style="left:399px;top:568px;width:262px;height:21px;line-height:19px;padding-top:1px;">Proximo Numero Nota = 13662</div>
<div class="f" style="left:711px;top:567px;width:36px;height:21px;line-height:20px;text-align:left;padding:0 3px;color:#9a9a9a;">L</div>
<div class="b" style="left:752px;top:570px;width:86px;height:17px;line-height:15px;padding-top:1px;">Ocorrencia NFE</div>
<div class="b" style="left:767.5px;top:592.5px;width:70.5px;height:17.5px;line-height:15.5px;padding-top:1px;">Duplica NF</div>
<div class="" style="left:55px;top:628.5px;width:42.5px;height:21.0px;background:#c9d8ec;border-radius:0 0 4px 4px;text-align:center;line-height:21px;color:#2a2a2a;">Boleto</div>
<div class="" style="left:100px;top:628.5px;width:42px;height:21.0px;background:#c9d8ec;border-radius:0 0 4px 4px;text-align:center;line-height:21px;color:#2a2a2a;">Oe</div>
<div class="" style="left:10px;top:628px;width:39px;height:20px;background:#8fb4d8;text-align:center;line-height:22px;">Nf</div>
<div class="" style="left:17px;top:95px;width:540px;height:25px;border:3px solid #f00;border-radius:2px;"></div>
<div class="" style="left:703px;top:379px;width:55.5px;height:48px;border:3.2px solid #f00;border-radius:2px;"></div>
<div class="" style="left:7px;top:625px;width:45px;height:26px;border:3px solid #f00;border-radius:3px;"></div>
<svg style="position:absolute;left:0;top:0" width="959" height="90" viewBox="0 0 959 90"><rect x="107" y="44" width="15.5" height="16" rx="1" fill="#8b8b8b"/><rect x="110" y="45" width="10.2" height="6.3" fill="#fff"/><rect x="111" y="54" width="8" height="6" fill="#b4b4b4"/><rect x="112.4" y="55" width="1.6" height="2.8" fill="#8b8b8b"/><rect x="134" y="46" width="15" height="13" rx="2" fill="#000"/><rect x="135" y="47" width="13" height="11" rx="1" fill="#c4c4c4"/><rect x="136" y="48" width="11" height="9" fill="#000"/><rect x="137" y="49" width="9" height="7" fill="#7ff4f8"/><rect x="159.3" y="43" width="18.5" height="19.5" fill="#dadada"/><rect x="163" y="46" width="12" height="7.6" fill="#fff"/><rect x="175" y="47" width="1" height="7" fill="#9a9a9a"/><rect x="164" y="53.4" width="11" height="0.8" fill="#9a9a9a"/><rect x="165" y="47.2" width="2" height="0.8" fill="#666"/><rect x="165" y="49" width="7" height="0.8" fill="#777"/><rect x="165" y="51" width="7" height="0.8" fill="#777"/><rect x="160.6" y="54.4" width="16" height="5" fill="#f6f6f6"/><rect x="161" y="59.4" width="15.4" height="0.9" fill="#a8a8a8"/><rect x="163" y="60.3" width="2" height="1" fill="#999"/><rect x="172" y="60.3" width="2" height="1" fill="#999"/><rect x="169" y="57" width="4" height="1" fill="#aaa"/><g transform="translate(0,0)"><polygon points="189.3,49.4 192.6,47.2 195.8,49.3 190.6,53.6" fill="#0000e6"/><polygon points="192.6,47.2 197,46.6 195.8,49.3" fill="#00e6f0"/><path d="M190 44.6 L197.2 46.6 M187.4 46.8 L190.2 53.6" stroke="#000" stroke-width="1.1" fill="none"/></g><circle cx="191.3" cy="44.4" r="0.8" fill="#f00"/><rect x="195.5" y="51.6" width="0.9" height="0.9" fill="#ff0"/><rect x="203.7" y="51.6" width="0.9" height="0.9" fill="#ff0"/><rect x="193.4" y="53.6" width="0.9" height="0.9" fill="#ff0"/><rect x="195.5" y="53.6" width="0.9" height="0.9" fill="#ff0"/><rect x="197.5" y="53.6" width="0.9" height="0.9" fill="#ff0"/><rect x="199.6" y="53.6" width="0.9" height="0.9" fill="#ff0"/><rect x="201.6" y="53.6" width="0.9" height="0.9" fill="#ff0"/><rect x="203.7" y="53.6" width="0.9" height="0.9" fill="#ff0"/><rect x="193.4" y="55.7" width="0.9" height="0.9" fill="#ff0"/><rect x="195.5" y="55.7" width="0.9" height="0.9" fill="#ff0"/><rect x="197.5" y="55.7" width="0.9" height="0.9" fill="#ff0"/><rect x="199.6" y="55.7" width="0.9" height="0.9" fill="#ff0"/><rect x="201.6" y="55.7" width="0.9" height="0.9" fill="#ff0"/><rect x="203.7" y="55.7" width="0.9" height="0.9" fill="#ff0"/><rect x="193.4" y="57.8" width="0.9" height="0.9" fill="#ff0"/><rect x="195.5" y="57.8" width="0.9" height="0.9" fill="#ff0"/><rect x="197.5" y="57.8" width="0.9" height="0.9" fill="#ff0"/><rect x="199.6" y="57.8" width="0.9" height="0.9" fill="#ff0"/><rect x="201.6" y="57.8" width="0.9" height="0.9" fill="#ff0"/><rect x="203.7" y="57.8" width="0.9" height="0.9" fill="#ff0"/><rect x="193.4" y="59.8" width="0.9" height="0.9" fill="#ff0"/><rect x="195.5" y="59.8" width="0.9" height="0.9" fill="#ff0"/><rect x="197.5" y="59.8" width="0.9" height="0.9" fill="#ff0"/><rect x="199.6" y="59.8" width="0.9" height="0.9" fill="#ff0"/><rect x="201.6" y="59.8" width="0.9" height="0.9" fill="#ff0"/><rect x="203.7" y="59.8" width="0.9" height="0.9" fill="#ff0"/><rect x="193.4" y="61.9" width="0.9" height="0.9" fill="#ff0"/><rect x="195.5" y="61.9" width="0.9" height="0.9" fill="#ff0"/><rect x="197.5" y="61.9" width="0.9" height="0.9" fill="#ff0"/><rect x="199.6" y="61.9" width="0.9" height="0.9" fill="#ff0"/><rect x="201.6" y="61.9" width="0.9" height="0.9" fill="#ff0"/><rect x="203.7" y="61.9" width="0.9" height="0.9" fill="#ff0"/><text x="195.2" y="60.6" font-family="Liberation Sans, sans-serif" font-weight="bold" font-size="13.5" fill="#000">?</text><g transform="translate(26.2,0)"><polygon points="189.3,49.4 192.6,47.2 195.8,49.3 190.6,53.6" fill="#0000e6"/><polygon points="192.6,47.2 197,46.6 195.8,49.3" fill="#00e6f0"/><path d="M190 44.6 L197.2 46.6 M187.4 46.8 L190.2 53.6" stroke="#000" stroke-width="1.1" fill="none"/></g><polygon points="225.8,47.1 230.2,46.4 227.1,50.8 228.9,50.8 220.2,61.8 223.3,56.1 220.8,56.1" fill="#000"/><polygon points="224.2,47.3 228.6,46.6 225.5,51 227.3,51 218.6,61.6 221.7,56.3 218.4,56.3" fill="#9a9a9a"/><polygon points="225,47.1 229.4,46.4 226.3,50.8 228.1,50.8 219.4,61.6 222.5,56.1 219.8,56.1" fill="#ff0"/><rect x="254.2" y="43" width="18.5" height="19.5" fill="#dadada"/><rect x="258.2" y="45.8" width="11.4" height="13.6" fill="#fbfbfb"/><rect x="269.59999999999997" y="46.8" width="1" height="13.4" fill="#a4a4a4"/><rect x="259.2" y="59.4" width="10.4" height="0.9" fill="#a4a4a4"/><rect x="260.3" y="49.6" width="1.2" height="6.6" fill="#9a9a9a"/><polygon points="266.3,49.6 266.3,56.199999999999996 262.09999999999997,52.9" fill="#9a9a9a"/><rect x="280.7" y="43" width="18.5" height="19.5" fill="#dadada"/><rect x="284.7" y="45.8" width="11.4" height="13.6" fill="#fbfbfb"/><rect x="296.09999999999997" y="46.8" width="1" height="13.4" fill="#a4a4a4"/><rect x="285.7" y="59.4" width="10.4" height="0.9" fill="#a4a4a4"/><polygon points="292.2,49.6 292.2,56.199999999999996 287.8,52.9" fill="#9a9a9a"/><rect x="311.5" y="45.8" width="10" height="13.2" fill="#fff"/><rect x="321.3" y="46" width="1.8" height="14.4" fill="#000"/><rect x="311.8" y="58.8" width="11" height="1.6" fill="#000"/><polygon points="314.6,49.3 314.6,56.5 319.6,52.9" fill="#000"/><rect x="334.2" y="43" width="18.5" height="19.5" fill="#dadada"/><rect x="338.2" y="45.8" width="11.4" height="13.6" fill="#fbfbfb"/><rect x="349.59999999999997" y="46.8" width="1" height="13.4" fill="#a4a4a4"/><rect x="339.2" y="59.4" width="10.4" height="0.9" fill="#a4a4a4"/><polygon points="341.09999999999997,49.6 341.09999999999997,56.199999999999996 345.3,52.9" fill="#9a9a9a"/><rect x="345.9" y="49.6" width="1.2" height="6.6" fill="#9a9a9a"/><rect x="375.4" y="45.4" width="15" height="4" fill="#fff" stroke="#000" stroke-width="1"/><path d="M384.4 48.4v9.8 M379.2 53.4h10.4" stroke="#000" stroke-width="3.3" fill="none"/><path d="M383.5 47v10.4 M378 52.5h10.8" stroke="#00b000" stroke-width="3.2" fill="none"/><path d="M383 47.4v9.4 M378.4 52h9.8" stroke="#00ff00" stroke-width="1.2" fill="none"/><rect x="400.5" y="43" width="18.5" height="19.5" fill="#dadada"/><rect x="401.4" y="45.4" width="15.2" height="3.6" fill="#fff"/><path d="M401.4 49V45.4H416.6V49" stroke="#8a8a8a" stroke-width="0.9" fill="none"/><path d="M405.6 49l9.6 9 M415.2 49l-9.6 9" stroke="#9c9c9c" stroke-width="2.6" fill="none"/><rect x="429" y="45" width="14.6" height="11" fill="#fff"/><path d="M429.4 49V45.4H443.4V57" stroke="#000" stroke-width="1" fill="none"/><rect x="430" y="46" width="13" height="1.1" fill="#008c8c"/><rect x="428" y="49.6" width="13.4" height="9.6" fill="#fff"/><path d="M428.5 58V50H441.5V54 M433 59.5H442.6" stroke="#000" stroke-width="1" fill="none"/><rect x="429" y="50.6" width="12" height="1.1" fill="#00a0a0"/><polygon points="429.4,58 433.6,52.4 436.6,58" fill="#d0d0d0"/><path d="M435.6 50.4L444 59.6" stroke="#000" stroke-width="5" stroke-linecap="round" fill="none"/><path d="M435.6 50.4L438.2 53.2" stroke="#ff00c8" stroke-width="3.6" stroke-linecap="round" fill="none"/><path d="M436.6 51L438.4 53" stroke="#ff2020" stroke-width="3.6" fill="none"/><path d="M438.6 53.6L440.8 56" stroke="#00d000" stroke-width="3.6" fill="none"/><path d="M441.6 56.9L443.8 59.3" stroke="#ffff00" stroke-width="3.4" stroke-linecap="round" fill="none"/><rect x="454.2" y="43" width="18.5" height="19.5" fill="#dadada"/><rect x="455.4" y="45.4" width="15.2" height="3.6" fill="#fff"/><path d="M455.4 49V45.4H470.6V49" stroke="#8a8a8a" stroke-width="0.9" fill="none"/><path d="M461 48.4L471 59" stroke="#a6a6a6" stroke-width="4" stroke-linecap="round" fill="none"/><path d="M462.4 48L472 58" stroke="#d8d8d8" stroke-width="1.4" fill="none"/><path d="M464 51.4l-2.4 2.4 M466 53.4l-2.4 2.4" stroke="#8c8c8c" stroke-width="0.8"/><polygon points="494.8,50.8 494.8,56 500.2,56" fill="#00008b"/><path d="M497.6 53.2C499 50.6 502 49.4 504.6 50.4C507 51.4 507.4 54 505.6 56.6" stroke="#00008b" stroke-width="1.4" fill="none" stroke-linecap="round"/><rect x="519.3" y="43" width="18.5" height="19.5" fill="#dadada"/><rect x="520.6" y="46" width="13" height="13.6" rx="1.5" fill="#fff"/><rect x="520.6" y="45.6" width="13" height="12.6" rx="1.5" fill="#e2e2e2" stroke="#7c7c7c" stroke-width="1"/><rect x="523.6" y="47.6" width="7" height="8.8" fill="#fff" stroke="#7c7c7c" stroke-width="0.9"/><path d="M524.4 47.4c0.6-2 1.6-3.2 2.7-3.2s2.1 1.2 2.7 3.2z" fill="#e8e8e8" stroke="#7c7c7c" stroke-width="0.9"/><path d="M525 50.2h4.2M525 52h3.4M525 53.8h3.8" stroke="#999" stroke-width="0.8"/><rect x="546" y="49.6" width="2.2" height="8" fill="#0030ff" stroke="#000" stroke-width="0.9"/><path d="M548.8 50.4L553 48.4L555.4 47.6L555.8 50.4L561 50.6L561 52.4L556.4 52.6L556.6 57L553 58.4L548.8 57.2Z" fill="#f0e838" stroke="#000" stroke-width="1"/><path d="M553.4 52.6h3M553.4 54.4h3M553.4 56.2h2.6" stroke="#000" stroke-width="0.8"/><ellipse cx="560.6" cy="48" rx="2.1" ry="2.2" fill="none" stroke="#f00" stroke-width="1.1"/><ellipse cx="560.6" cy="54.6" rx="2.1" ry="2.2" fill="none" stroke="#f00" stroke-width="1.1"/><path d="M559.6 50.2l2 2.2M561.6 50.2l-2 2.2" stroke="#f00" stroke-width="0.9"/><text x="575.4" y="60" font-family="Liberation Serif, serif" font-weight="bold" font-size="23.5" fill="#00008b">?</text><svg x="613" y="42" width="21.4" height="11" overflow="hidden"><text x="1" y="9.2" font-family="Liberation Mono, monospace" font-weight="bold" font-size="11" fill="#ff0" stroke="#000" stroke-width="1.1" paint-order="stroke" textLength="22.5" lengthAdjust="spacingAndGlyphs">Menu</text></svg><rect x="614" y="51.6" width="20.4" height="0.9" fill="#000"/><rect x="614" y="53" width="20.4" height="9.6" fill="#fff"/><path d="M614.5 62.6V53.4H634.4" stroke="#000" stroke-width="1" fill="none"/><rect x="615" y="54" width="19.4" height="1.3" fill="#00e0e8"/><rect x="615" y="55.4" width="19.4" height="0.8" fill="#000"/><path d="M616.4 58.2h1.6M619.4 58.4h3.4M624.4 58.2h1.6M627.4 58.4h4 M616.4 61h1.6M619.4 61.2h3.4M624.4 61h1.6M627.4 61.2h3.4" stroke="#000" stroke-width="1.3"/><rect x="640.6" y="43.6" width="13.6" height="16.4" fill="#fff"/><rect x="641.4" y="44.4" width="11.4" height="13.8" fill="#c8c8c8" stroke="#000" stroke-width="1"/><rect x="648.4" y="45.6" width="2.6" height="11" fill="#e8e8e8"/><path d="M651.6 45V57.4H646" stroke="#000" stroke-width="1" fill="none"/><polygon points="642,44.9 648,44.9 648,55.6 645.6,55.6 645.6,56.8 642,56.8" fill="#f00"/><rect x="645.8" y="48.8" width="1.2" height="1.2" fill="#ff0"/><rect x="640.6" y="48" width="1.2" height="1.2" fill="#ff0"/><rect x="640.6" y="52" width="1.2" height="1.2" fill="#ff0"/></svg>
<svg style="position:absolute;left:0;top:0;pointer-events:none" width="959" height="656" viewBox="0 0 959 656"><polygon points="716.3,399.1 729.1,387.3 738.6,394.3 740.7,399.1 744.1,406.5 735.5,415.3 731.2,412.6 724.4,414.0 716.9,406.5" fill="#000"/><polygon points="717.6,398.4 729.1,388.2 736.9,394.6 725.5,404.9" fill="#e4e4e4"/><polygon points="717.6,398.4 729.1,388.2 730.1,389.0 718.7,399.3" fill="#e6e000"/><polygon points="717.4,399.5 725.2,405.7 725.2,413.3 717.6,406.3" fill="#a8a8a8"/><polygon points="725.8,405.4 737.1,395.4 740.1,399.2 727.1,409.5" fill="#c8c8c8"/><polygon points="729.1,404.5 736.6,398.4 740.7,403.1 733.2,409.5" fill="#3c3c3c"/><polygon points="731.4,406.5 739.0,401.1 743.4,406.5 735.5,414.4" fill="#fff"/><polygon points="726.6,407.9 729.0,406.3 729.0,413.0 726.6,413.6" fill="#f4f4f4"/><polygon points="729.6,407.9 731.4,407.1 732.5,412.2 730.1,413.3" fill="#e0e0e0"/><path d="M733.9,407.6L739.3,404.1M734.7,409.0L740.4,405.4M735.5,410.6L739.6,407.9" stroke="#999" stroke-width="0.7" fill="none"/><path d="M720.3,397.3L726.6,402.7" stroke="#a8a8a8" stroke-width="0.5" fill="none"/><path d="M721.8,396.1L727.9,401.7" stroke="#a8a8a8" stroke-width="0.5" fill="none"/><path d="M723.3,394.9L729.3,400.6" stroke="#a8a8a8" stroke-width="0.5" fill="none"/><path d="M724.8,393.7L730.6,399.5" stroke="#a8a8a8" stroke-width="0.5" fill="none"/><path d="M726.3,392.4L732.0,398.4" stroke="#a8a8a8" stroke-width="0.5" fill="none"/><path d="M727.8,391.2L733.3,397.3" stroke="#a8a8a8" stroke-width="0.5" fill="none"/><path d="M729.3,390.0L734.7,396.2" stroke="#a8a8a8" stroke-width="0.5" fill="none"/><path d="M730.8,388.8L736.1,395.1" stroke="#a8a8a8" stroke-width="0.5" fill="none"/><polygon points="785.1,385.9 796.5,385.9 799.6,388.9 799.6,407.6 785.1,407.6" fill="#f4f8fd" stroke="#b8cce8" stroke-width="0.7" stroke-linejoin="round"/><path d="M786.8,388.9L796.5,388.9" stroke="#7aa6dc" stroke-width="0.9" fill="none"/><path d="M786.8,391.4L796.5,391.4" stroke="#7aa6dc" stroke-width="0.9" fill="none"/><path d="M786.8,393.8L796.5,393.8" stroke="#7aa6dc" stroke-width="0.9" fill="none"/><path d="M786.8,396.2L796.5,396.2" stroke="#7aa6dc" stroke-width="0.9" fill="none"/><path d="M786.8,398.7L796.5,398.7" stroke="#7aa6dc" stroke-width="0.9" fill="none"/><path d="M786.8,401.1L796.5,401.1" stroke="#7aa6dc" stroke-width="0.9" fill="none"/><path d="M786.8,403.6L796.5,403.6" stroke="#7aa6dc" stroke-width="0.9" fill="none"/><path d="M786.8,406.0L796.5,406.0" stroke="#7aa6dc" stroke-width="0.9" fill="none"/><polygon points="796.5,390.0 801.4,390.0 803.3,392.2 803.3,400.0 796.5,400.0" fill="#fff" stroke="#9cb8dc" stroke-width="0.6" stroke-linejoin="round"/><polygon points="793.5,399.8 805.7,399.8 807.1,401.7 807.1,406.0 792.2,406.0 792.2,401.7" fill="#7fb0e4" stroke="#4f86c6" stroke-width="0.7" stroke-linejoin="round"/><polygon points="794.6,401.7 804.6,401.7 804.6,403.0 794.6,403.0" fill="#3f7ac0"/><polygon points="794.9,406.0 804.4,406.0 804.4,408.2 794.9,408.2" fill="#e4eefa" stroke="#9cb8dc" stroke-width="0.5" stroke-linejoin="round"/><path d="M795.6,410.3L804.1,410.3" stroke="#a8c4e4" stroke-width="1.2" fill="none"/><path d="M835 339.7L773.5 373.8" stroke="#f00" stroke-width="2.9" stroke-linecap="round" fill="none"/><polygon points="762,380.5 772,369.5 776.8,377.5" fill="#f00"/></svg>
</body></html>
